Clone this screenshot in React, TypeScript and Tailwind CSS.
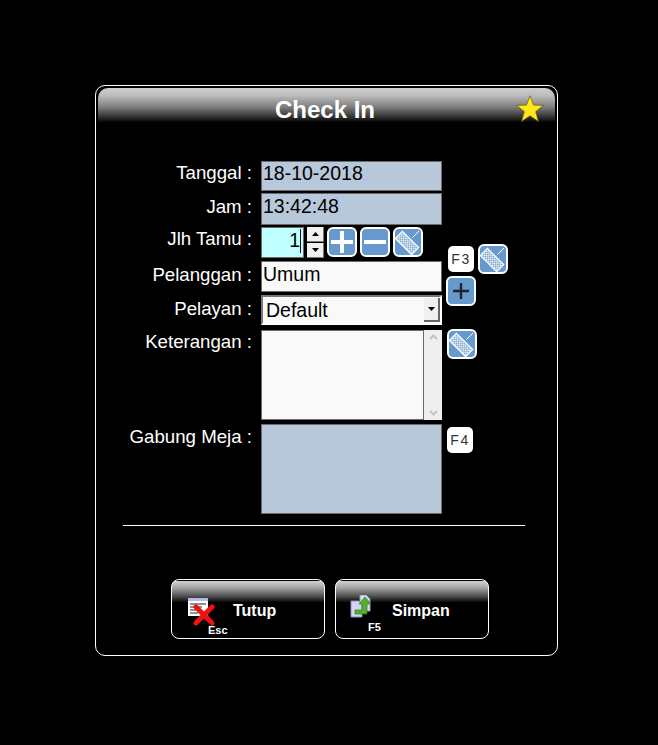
const font = "font-['Liberation_Sans',Arial,sans-serif]";

function IconBox({ children, className = "" }: { children: React.ReactNode; className?: string }) {
  return (
    <div className={`w-[30px] h-[30px] shrink-0 rounded-[6px] border-2 border-white bg-[#6699cc] overflow-hidden ${className}`}>
      {children}
    </div>
  );
}

function KeyboardIcon({ className = "" }: { className?: string }) {
  return (
    <IconBox className={className}>
      <svg width="26" height="26" viewBox="0 0 26 26">
        <defs>
          <pattern id="chk" width="2.8" height="2.8" patternUnits="userSpaceOnUse">
            <rect width="2.8" height="2.8" fill="#ffffff" />
            <rect width="1.4" height="1.4" fill="#6699cc" />
            <rect x="1.4" y="1.4" width="1.4" height="1.4" fill="#6699cc" />
          </pattern>
        </defs>
        <g transform="rotate(45 12 14)">
          <rect x="0.5" y="9" width="23" height="10" fill="url(#chk)" stroke="#fff" strokeWidth="1.2" />
        </g>
        <path d="M17.5 8.5 L24 2" stroke="#fff" strokeWidth="1" />
      </svg>
    </IconBox>
  );
}

function PlusIcon({ dark = false, className = "" }: { dark?: boolean; className?: string }) {
  return (
    <IconBox className={className}>
      <svg width="26" height="26" viewBox="0 0 26 26">
        {dark ? (
          <path d="M13 5 V21 M5 13 H21" stroke="#1c2530" strokeWidth="2.4" />
        ) : (
          <path d="M13 2 V24 M2 13 H24" stroke="#ffffff" strokeWidth="4" />
        )}
      </svg>
    </IconBox>
  );
}

function MinusIcon() {
  return (
    <IconBox>
      <svg width="26" height="26" viewBox="0 0 26 26">
        <path d="M2 13 H24" stroke="#fff" strokeWidth="4" />
      </svg>
    </IconBox>
  );
}

function KeyHint({ label }: { label: string }) {
  return (
    <div className="w-[26px] h-[26px] shrink-0 rounded-[5px] bg-white flex items-center justify-center text-[14px] tracking-[1.5px] text-[#333]">
      {label}
    </div>
  );
}

function Row({ label, pad, children }: { label: string; pad: string; children: React.ReactNode }) {
  return (
    <div className="flex items-start">
      <div className={`w-[154px] text-right text-white text-[18.67px] leading-[22px] whitespace-nowrap ${pad}`}>{label}</div>
      <div className="ml-[9px] w-[181px]">{children}</div>
    </div>
  );
}

function Spin({ up }: { up?: boolean }) {
  return (
    <div className="w-[17px] h-[15px] bg-[#f0f0f0] border-r border-b border-[#777] flex items-center justify-center">
      <svg width="7" height="4" viewBox="0 0 7 4">
        <path d={up ? "M3.5 0 L7 4 H0 Z" : "M0 0 H7 L3.5 4 Z"} fill="#000" />
      </svg>
    </div>
  );
}

function ActionButton({ label, hint, icon, iconPad, textPad, hintPad }: { label: string; hint: string; icon: React.ReactNode; iconPad: string; textPad: string; hintPad: string }) {
  return (
    <button className="relative w-[154px] h-[60px] rounded-[8px] border border-white bg-black bg-[linear-gradient(#d0d0d0_0%,#a8a8a8_30%,#555_70%,#0a0a0a_100%)] bg-no-repeat bg-[length:100%_21px] bg-[position:0_1px] flex items-start text-left">
      <div className={`shrink-0 ${iconPad}`}>{icon}</div>
      <div className={`text-white font-bold text-[16px] leading-[18px] ${textPad}`}>{label}</div>
      <div className={`absolute text-white font-bold text-[11px] leading-[12px] ${hintPad}`}>{hint}</div>
    </button>
  );
}

function CloseIcon() {
  return (
    <svg width="30" height="28" viewBox="0 0 30 28">
      <rect x="1" y="0" width="20" height="3" fill="#b9b9e8" />
      <rect x="1" y="3" width="20" height="15" fill="#fff" />
      <path d="M3 6 H19 M3 9 H15 M3 12 H14 M3 15 H11" stroke="#222" strokeWidth="1" />
      <path d="M9 9 L25 25 M25 9 L9 25" stroke="#ee1111" strokeWidth="5" strokeLinecap="round" />
    </svg>
  );
}

function SaveIcon() {
  return (
    <svg width="22" height="24" viewBox="0 0 22 24">
      <path d="M10 0 H16 L20 4 V16 H10 Z" fill="#dcdcf5" stroke="#9a9ac8" />
      <path d="M1 6 H9 L12 9 V22 H1 Z" fill="#d4d4f2" stroke="#8c8cc0" />
      <path d="M5 19 V15 H12 V9 H9 L15 2 L21 9 H17 V19 Z" fill="#55b030" stroke="#2f7d1a" strokeWidth="0.7" />
    </svg>
  );
}

export default function App() {
  const blue = "bg-[#b6c8da] border border-[#6a6a6a] text-black text-[19.5px] leading-[22px] pl-[1px]";
  const white = "bg-[#f9f9f9] border border-[#6a6a6a] text-black text-[19.5px]";
  return (
    <div className={`w-[658px] h-[745px] bg-black pl-[95px] pt-[85px] overflow-hidden ${font}`}>
      <div className="w-[463px] h-[571px] rounded-[10px] border border-white bg-black p-[2px]">
        <div className="h-[34px] rounded-t-[10px] bg-[linear-gradient(#cfcfcf_0%,#bcbcbc_22%,#808080_55%,#2a2a2a_88%,#050505_100%)] flex items-center justify-between pl-[176px] pr-[11px]">
          <span className="text-white font-bold text-[24px] leading-[28px] pl-[1px] pt-[9px]">Check In</span>
          <svg width="28" height="28" viewBox="0 0 28 28" className="mt-[8px]">
            <path d="M14 0.8 L17.6 10.1 L27.4 10.4 L19.7 16.6 L22.4 26.4 L14 20.8 L5.6 26.4 L8.3 16.6 L0.6 10.4 L10.4 10.1 Z" fill="#ffe81a" stroke="#5a5a20" strokeWidth="0.7" />
          </svg>
        </div>

        <div className="mt-[39px] flex items-start">
          <div className="w-[344px] flex flex-col">
            <Row label="Tanggal :" pad="pt-[1px]">
              <div className={`h-[30px] ${blue}`}>18-10-2018</div>
            </Row>
            <div className="h-[2px]" />
            <Row label="Jam :" pad="pt-[3px]">
              <div className={`h-[32px] pt-[1px] ${blue}`}>13:42:48</div>
            </Row>
            <div className="h-[2px]" />
            <Row label="Jlh Tamu :" pad="pt-[1px]">
              <div className="flex items-start h-[32px]">
                <div className="w-[43px] h-[31px] bg-[#bfffff] border border-[#6a6a6a] flex justify-end text-black text-[19.5px] leading-[22px] pt-[1px]">
                  <span>1</span>
                  <span className="w-px h-[24px] bg-[#300] mr-[2px]" />
                </div>
                <div className="ml-[3px] flex flex-col gap-[1px] w-[17px]">
                  <Spin up />
                  <Spin />
                </div>
                <div className="ml-[3px] flex gap-[3px]">
                  <PlusIcon />
                  <MinusIcon />
                  <KeyboardIcon />
                </div>
              </div>
            </Row>
            <div className="h-[2px]" />
            <Row label="Pelanggan :" pad="pt-[3px]">
              <div className={`h-[31px] pl-[1px] leading-[25px] ${white}`}>Umum</div>
            </Row>
            <div className="h-[3px]" />
            <Row label="Pelayan :" pad="pt-[3px]">
              <div className="h-[30px] bg-[#f9f9f9] border-2 border-[#777] border-b-white border-r-white flex items-center justify-between pl-[3px] pt-[1px] text-black text-[19.5px]">
                <span>Default</span>
                <div className="w-[16px] h-[24px] -mt-[1px] bg-[#f0f0f0] border-r-2 border-b-2 border-[#666] flex items-center justify-center">
                  <svg width="7" height="4" viewBox="0 0 7 4">
                    <path d="M0 0 H7 L3.5 4 Z" fill="#000" />
                  </svg>
                </div>
              </div>
            </Row>
            <div className="h-[5px]" />
            <Row label="Keterangan :" pad="pt-[1px]">
              <div className="h-[90px] flex">
                <div className="w-[163px] bg-[#f9f9f9] border border-[#6a6a6a]" />
                <div className="w-[18px] bg-[#efefef] flex flex-col items-center justify-between py-[4px]">
                  <svg width="9" height="6" viewBox="0 0 9 6">
                    <path d="M1 5 L4.5 1.5 L8 5" fill="none" stroke="#c4c4c4" strokeWidth="2" />
                  </svg>
                  <svg width="9" height="6" viewBox="0 0 9 6">
                    <path d="M1 1 L4.5 4.5 L8 1" fill="none" stroke="#c4c4c4" strokeWidth="2" />
                  </svg>
                </div>
              </div>
            </Row>
            <div className="h-[4px]" />
            <Row label="Gabung Meja :" pad="pt-[2px]">
              <div className="h-[90px] bg-[#b6c8da] border border-[#6a6a6a]" />
            </Row>
          </div>

          <div className="ml-[4px] mt-[83px] flex flex-col items-start">
            <div className="flex items-center ml-[2px] gap-[4px]">
              <KeyHint label="F3" />
              <KeyboardIcon />
            </div>
            <PlusIcon dark className="mt-[2px]" />
            <KeyboardIcon className="mt-[23px] ml-[1px]" />
            <div className="mt-[68px] ml-[1px]">
              <KeyHint label="F4" />
            </div>
          </div>
        </div>

        <div className="mt-[11px] ml-[25px] w-[402px] h-px bg-white" />

        <div className="mt-[53px] ml-[73px] flex gap-[10px]">
          <ActionButton label="Tutup" hint="Esc" icon={<CloseIcon />} iconPad="pl-[15px] pt-[18px]" textPad="pl-[16px] pt-[22px]" hintPad="left-[36px] top-[44px]" />
          <ActionButton label="Simpan" hint="F5" icon={<SaveIcon />} iconPad="pl-[14px] pt-[15px]" textPad="pl-[20px] pt-[22px]" hintPad="left-[32px] top-[41px]" />
        </div>
      </div>
    </div>
  );
}
